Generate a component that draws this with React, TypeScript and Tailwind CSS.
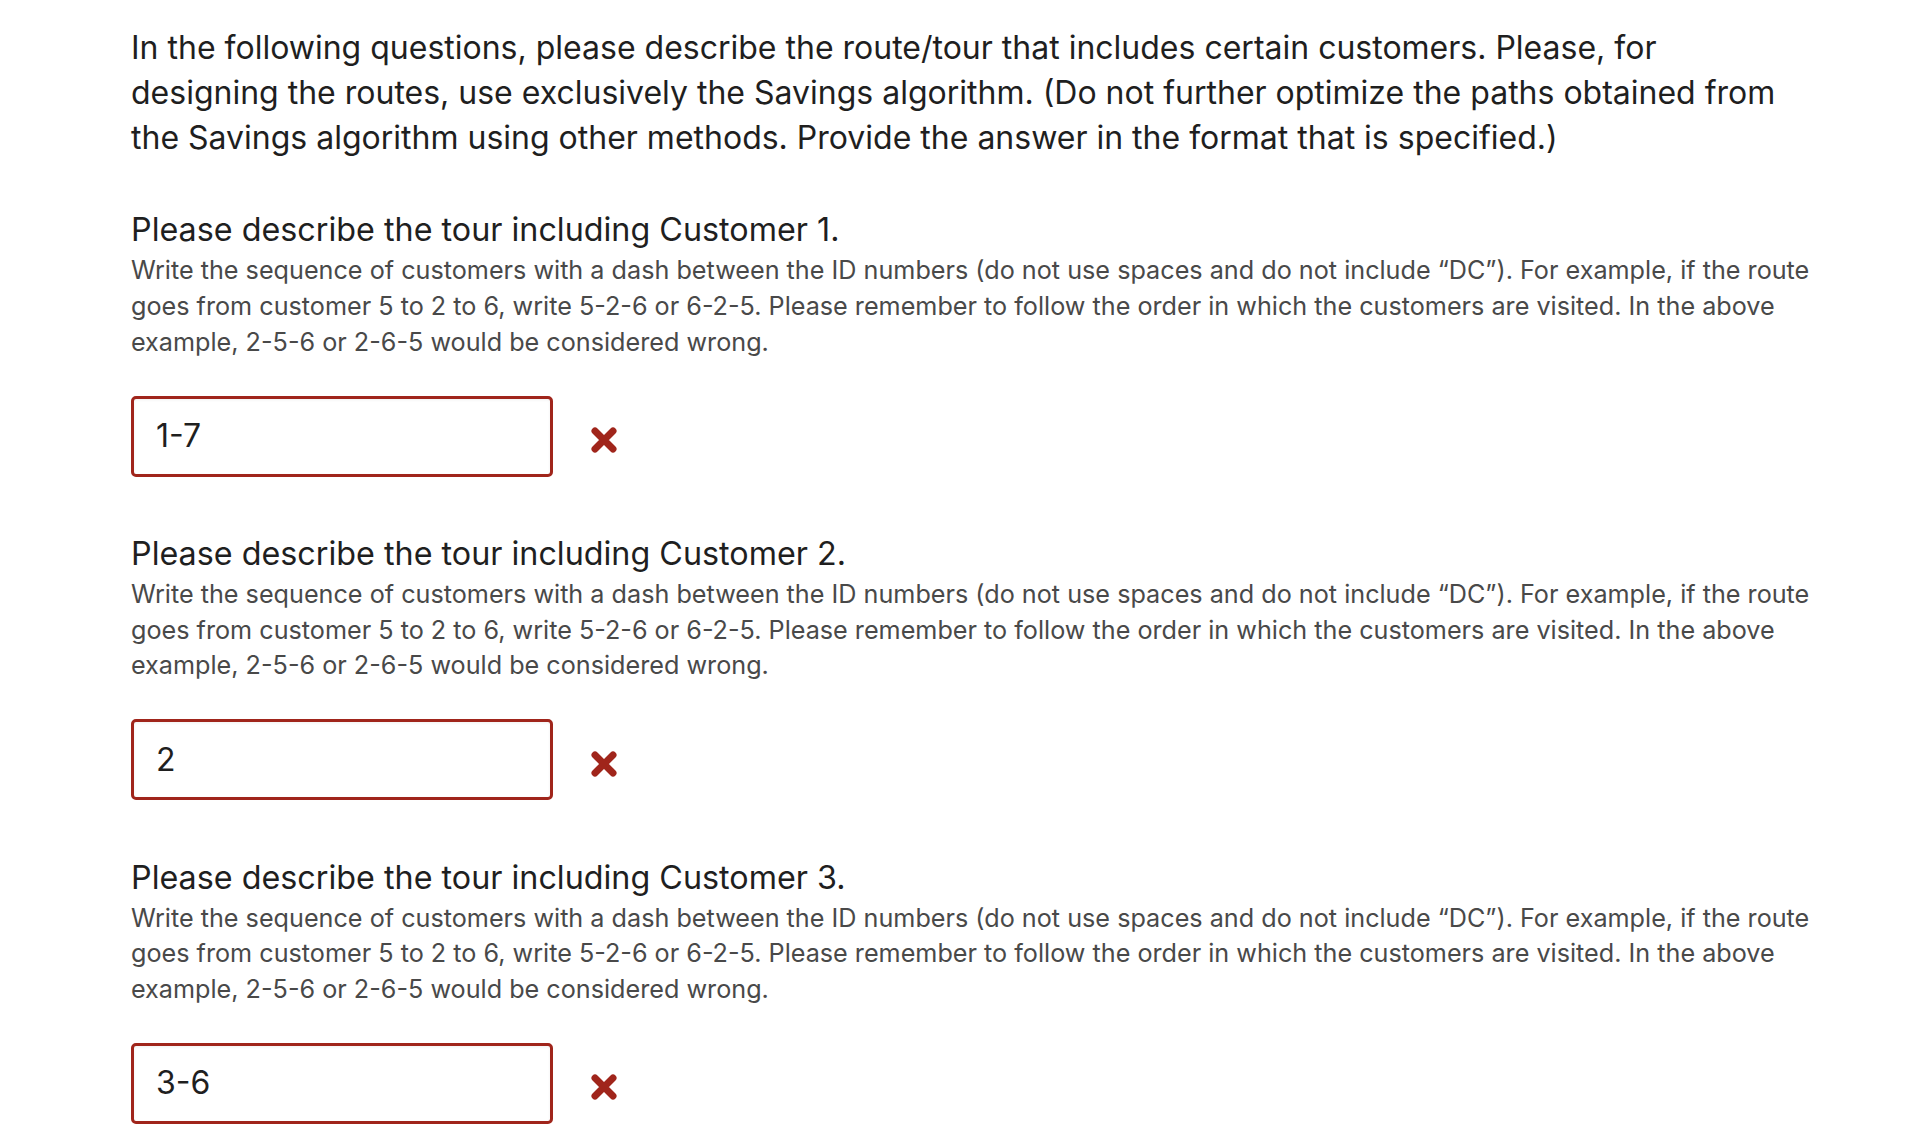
import React from "react";

function XMark() {
  return (
    <svg width="28" height="28" viewBox="0 0 28 28" aria-hidden="true" className="mt-[8px]">
      <path d="M5 5 L23 23 M23 5 L5 23" stroke="#a0251b" strokeWidth="7" strokeLinecap="round" fill="none" />
    </svg>
  );
}

const DESC =
  "Write the sequence of customers with a dash between the ID numbers (do not use spaces and do not include \u201CDC\u201D). For example, if the route goes from customer 5 to 2 to 6, write 5-2-6 or 6-2-5. Please remember to follow the order in which the customers are visited. In the above example, 2-5-6 or 2-6-5 would be considered wrong.";

function Question({ n, value, first }: { n: number; value: string; first?: boolean }) {
  return (
    <div className={first ? "mt-[48px]" : "mt-[55.5px]"}>
      <h2 className="text-[32.3px] leading-[44.8px] text-[#1f1f1f] font-normal">
        Please describe the tour including Customer {n}.
      </h2>
      <p className="text-[25.2px] leading-[35.8px] text-[#494949]">{DESC}</p>
      <div className="mt-[35px] flex items-center gap-[37px]">
        <div className="w-[422px] h-[81px] border-[3px] border-[#a0251b] rounded-[5px] flex items-center pl-[22px] text-[32px] text-[#1f1f1f] shadow-[inset_0_1px_3px_rgba(0,0,0,0.06)]">
          {value}
        </div>
        <XMark />
      </div>
    </div>
  );
}

export default function App() {
  return (
    <div
      className="bg-white min-h-[1146px] pl-[131px] pt-[26px]"
      style={{ fontFamily: "Inter, 'Noto Sans', sans-serif" }}
    >
      <div className="w-[1680px]">
        <p className="text-[32px] leading-[44.8px] text-[#1f1f1f]">
          In the following questions, please describe the route/tour that includes certain customers. Please, for
          designing the routes, use exclusively the Savings algorithm. (Do not further optimize the paths obtained from
          the Savings algorithm using other methods. Provide the answer in the format that is specified.)
        </p>
        <Question n={1} value="1-7" first />
        <Question n={2} value="2" />
        <Question n={3} value="3-6" />
      </div>
    </div>
  );
}
